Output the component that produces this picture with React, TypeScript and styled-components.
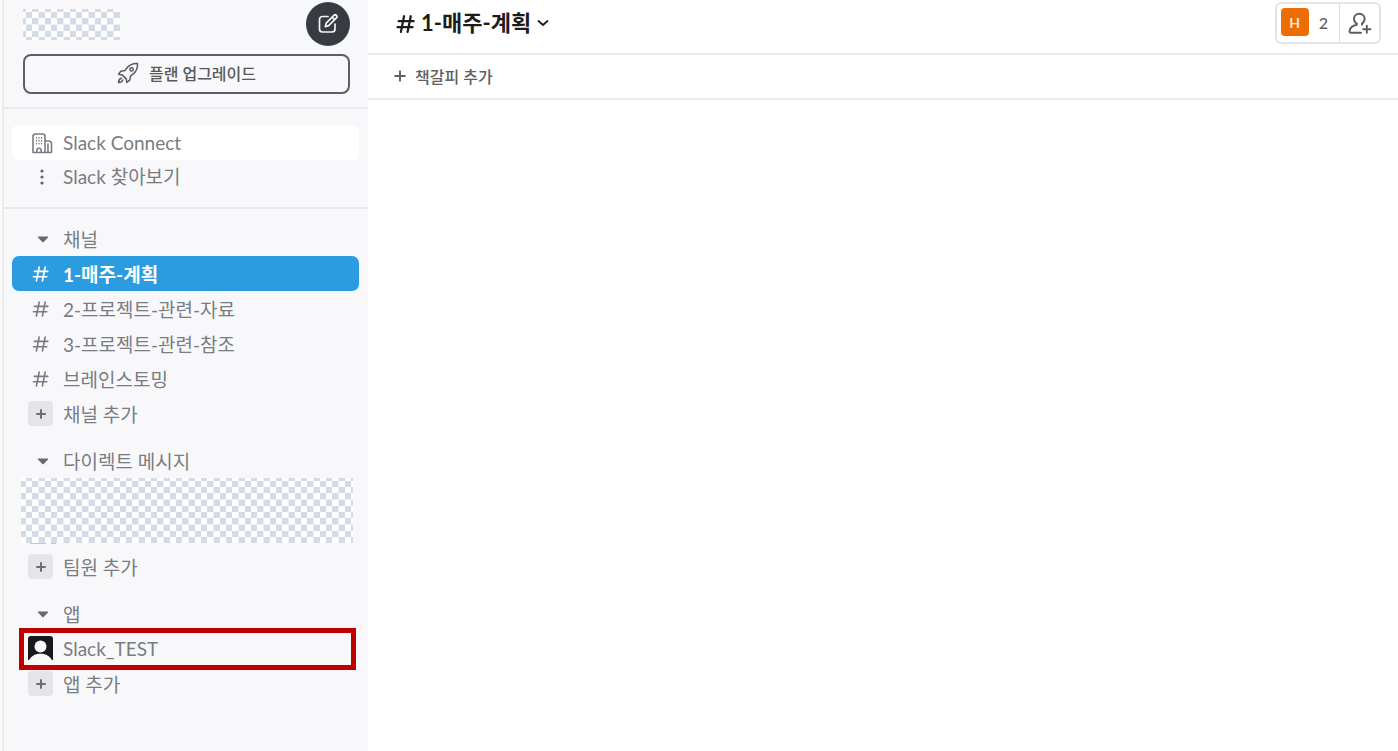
import React from "react";
import styled, { createGlobalStyle } from "styled-components";

const GlobalStyle = createGlobalStyle`
  *, *::before, *::after { box-sizing: border-box; }
  body {
    margin: 0;
    background: #fff;
    font-family: Lato, "Noto Sans CJK KR", sans-serif;
    color: #1d1c1d;
  }
  button {
    font: inherit;
    color: inherit;
    background: none;
    border: 0;
    padding: 0;
    cursor: pointer;
  }
  a { color: inherit; text-decoration: none; }
  h1, h2, ul { margin: 0; padding: 0; font: inherit; }
  ul { list-style: none; }
  svg { display: block; flex: none; }
`;

const Shell = styled.div`
  display: flex;
  min-height: 100vh;
`;

const Sidebar = styled.aside`
  display: flex;
  flex: 0 0 368px;
  background: #f8f8fa;
  border-left: 2px solid #fbfbfc;
  color: #797d82;
  font-size: 19px;
`;

const SidebarInner = styled.div`
  flex: 1;
  min-width: 0;
  border-left: 2px solid #ececef;
`;

const WorkspaceHeader = styled.header`
  height: 109px;
  padding: 2px 18px 0 19px;
  border-bottom: 2px solid #e9e9ec;
`;

const WorkspaceBar = styled.div`
  display: flex;
  justify-content: space-between;
  align-items: center;
  height: 44px;
`;

const ComposeButton = styled.button`
  display: grid;
  place-items: center;
  width: 44px;
  height: 44px;
  border-radius: 50%;
  background: #363c42;
  color: #f4f4f5;
`;

const UpgradeButton = styled.button`
  display: flex;
  align-items: center;
  justify-content: center;
  gap: 10px;
  width: 100%;
  height: 40px;
  margin-top: 8px;
  padding-bottom: 2px;
  border: 2px solid #5b6068;
  border-radius: 8px;
  color: #565a60;
  font-size: 16px;
  font-weight: 500;
`;

const Item = styled.a<{ $tone?: "active" | "raised" }>`
  display: flex;
  align-items: center;
  height: 35px;
  border-radius: 7px;
  background: ${(p) =>
    p.$tone === "active" ? "#2c9ce0" : p.$tone === "raised" ? "#fff" : "none"};
  color: ${(p) => (p.$tone === "active" ? "#fff" : "inherit")};
  font-weight: ${(p) => (p.$tone === "active" ? 700 : 400)};
`;

const QuickLinks = styled.nav`
  height: 100px;
  padding: 16px 9px 0 8px;
  border-bottom: 2px solid #e9e9ec;

  ${Item} + ${Item} { margin-top: -2px; }
`;

const Section = styled.section`
  padding: 12px 9px 0 8px;
`;

const SectionTitle = styled.button`
  display: flex;
  align-items: center;
  width: 100%;
  height: 35px;
`;

const IconSlot = styled.span<{ $indent?: number }>`
  display: flex;
  align-items: center;
  justify-content: center;
  flex: none;
  width: 25px;
  height: 25px;
  margin: 0 10px 0 16px;
  padding-left: ${(p) => p.$indent ?? 0}px;
`;

const AddSlot = styled(IconSlot)`
  border-radius: 4px;
  background: #e5e5e7;
  color: #6b6f74;
`;

const Highlight = styled.div`
  margin: -3px 3px -4px 7px;
  border: 5px solid #c00000;

  ${Item} { margin: -2px -8px -1px -12px; }
`;

const Masked = styled.div`
  margin: 0 6px 5px 9px;
`;

const SliverRow = styled.div`
  display: flex;
  gap: 5px;
  padding-left: 9px;

  i { height: 1px; background: #c5c8cd; width: 5px; }
  i:first-child { background: #f1b98d; width: 16px; }
`;

const Main = styled.main`
  flex: 1;
  min-width: 0;
`;

const ChannelHeader = styled.header`
  display: flex;
  align-items: center;
  justify-content: space-between;
  height: 55px;
  padding: 0 17px 7px 28px;
  border-bottom: 2px solid #ebebeb;
`;

const ChannelTitle = styled.button`
  display: flex;
  align-items: center;
  gap: 6px;
  font-size: 22px;
  font-weight: 700;
  line-height: 32px;
`;

const Members = styled.div`
  display: flex;
  height: 42px;
  border: 2px solid #e4e4e4;
  border-radius: 6px;
`;

const MemberCount = styled.button`
  display: flex;
  align-items: center;
  gap: 10px;
  padding: 0 11px 2px 4px;
  border-right: 1px solid #dcdcdc;
  color: #616061;
  font-size: 16px;
  font-weight: 500;
`;

const Avatar = styled.span`
  display: grid;
  place-items: center;
  width: 28px;
  height: 28px;
  border-radius: 4px;
  background: #ee6c04;
  color: #fce5d3;
  font-size: 14px;
  font-weight: 700;
`;

const InviteButton = styled.button`
  display: grid;
  place-items: center;
  width: 39px;
`;

const BookmarkBar = styled.div`
  display: flex;
  align-items: center;
  height: 45px;
  padding: 0 26px 2px;
  border-bottom: 2px solid #ebebeb;
`;

const BookmarkButton = styled.button`
  display: flex;
  align-items: center;
  gap: 9px;
  color: #616061;
  font-size: 16px;
  font-weight: 500;
`;

function Checker({ id, width, height, dx, dy }: {
  id: string; width: number; height: number; dx: number; dy: number;
}) {
  const squares: React.ReactNode[] = [];
  for (let r = 0; r < 4; r++)
    for (let c = 0; c < 4; c++)
      if ((r + c) % 2 === 0)
        squares.push(<rect key={`${r}${c}`} x={c * 6} y={r * 6} width="6" height="6" fill="#d5dbe6" />);
  return (
    <svg width={width} height={height} aria-hidden="true" shapeRendering="crispEdges">
      <defs>
        <pattern id={id} x={dx} y={dy} width="25" height="25" patternUnits="userSpaceOnUse">
          <rect width="25" height="25" fill="#fff" />
          {squares}
          <path d="M24 0h1v25H0v-1h24z" fill="#eef0f5" />
        </pattern>
      </defs>
      <rect width={width} height={height} fill={`url(#${id})`} />
    </svg>
  );
}

const stroke = { fill: "none", stroke: "currentColor", strokeLinecap: "round", strokeLinejoin: "round" } as const;

const Hash = ({ size = 17, weight = 1.6 }: { size?: number; weight?: number }) => (
  <svg width={size} height={size} viewBox="0 0 17 17" {...stroke} strokeWidth={weight}>
    <path d="M7.2 2 4.4 16M13.2 2l-2.800 14M2.400 6.400h13.400M1.400 11.800h13.400" />
  </svg>
);

const Plus = ({ size = 10, weight = 2 }: { size?: number; weight?: number }) => (
  <svg width={size} height={size} viewBox="0 0 10 10" {...stroke} strokeWidth={weight}>
    <path d="M5 1v8M1 5h8" />
  </svg>
);

const Caret = () => (
  <svg width="12" height="8" viewBox="0 0 12 8" fill="#666b71">
    <path d="M1.400 1.500h9.200c.6 0 .8.6.4 1L6.700 6.900a1 1 0 0 1-1.400 0L1 2.500c-.4-.4-.2-1 .4-1z" />
  </svg>
);

const Compose = () => (
  <svg width="22" height="22" viewBox="0 0 22 22" {...stroke} strokeWidth="1.7">
    <path d="M11 3.500H5.500a3 3 0 0 0-3 3V16a3 3 0 0 0 3 3H15a3 3 0 0 0 3-3v-5" />
    <path d="m8.300 13.700.9-3.600 7.700-7.700a1.700 1.700 0 0 1 2.500 2.500l-7.700 7.700zM15.300 4.300l2.400 2.400" />
  </svg>
);

const Rocket = () => (
  <svg width="22" height="22" viewBox="0 0 22 22" {...stroke} strokeWidth="1.5">
    <path d="M20.500 1.500c-5-.3-8.500 1.500-11.200 5.200L8 8.600l-4.200.7-2.200 3 3.600.6 4 4 .6 3.500 3-2.200.7-4.100 1.900-1.400c3.700-2.700 5.400-6.200 5.100-11.200z" />
    <circle cx="14.600" cy="7.400" r="1.700" />
    <path d="M4.300 16.200c-1.700.4-2.600 1.900-2.800 4.400 2.500-.2 4-1.100 4.300-2.700" />
  </svg>
);

const Building = () => (
  <svg width="22" height="22" viewBox="0 0 22 22" {...stroke} strokeWidth="1.6">
    <path d="M2 20.500V4.500A2.500 2.500 0 0 1 4.500 2h7A2.500 2.500 0 0 1 14 4.500v16zM14 9h3.500a3 3 0 0 1 3 3v8.500H14M17 12v8" />
    <path d="M5.800 20v-1.500a2.200 2.200 0 0 1 4.400 0V20" />
    <path d="M5.500 5.700v8M8 5.700v8M10.500 5.700v8" strokeWidth="1.300" strokeDasharray=".5 2.300" />
  </svg>
);

const Dots = () => (
  <svg width="4" height="18" viewBox="0 0 4 18" fill="#5f646a">
    <circle cx="2" cy="4" r="1.600" />
    <circle cx="2" cy="10" r="1.600" />
    <circle cx="2" cy="16" r="1.600" />
  </svg>
);

const Chevron = () => (
  <svg width="12" height="8" viewBox="0 0 12 8" {...stroke} strokeWidth="1.700">
    <path d="m1.500 2 4.500 4 4.500-4" />
  </svg>
);

const InviteIcon = () => (
  <svg width="24" height="24" viewBox="0 0 24 24" {...stroke} stroke="#5c5b5e" strokeWidth="1.900">
    <path d="M8.600 12.600C6.900 11.600 6 10 6 7.800 6 4.800 8.200 2.800 11.300 2.800s5.300 2 5.300 5c0 2.200-.9 3.800-2.600 4.800" />
    <path d="M8.600 12.600v1.400c-4 .5-6.600 2.400-7.100 6-.1 1 .4 1.700 1.300 1.700H13M14 12.600v1.200M18.800 14.600v7.200M15.200 18.200h7.200" />
  </svg>
);

const BotAvatar = () => (
  <svg width="25" height="25" viewBox="0 0 25 25">
    <path d="M3 0h19a3 3 0 0 1 3 3v21H0V3a3 3 0 0 1 3-3z" fill="#17181a" />
    <circle cx="12.500" cy="10.500" r="6" fill="#f8f8fa" />
    <path d="M.8 25C2.500 20.500 6.500 17.800 12.500 17.800S22.500 20.500 24.200 25z" fill="#f8f8fa" />
  </svg>
);

const SectionHeading = ({ children }: { children: React.ReactNode }) => (
  <h2>
    <SectionTitle type="button" aria-expanded="true">
      <IconSlot $indent={5}><Caret /></IconSlot>{children}
    </SectionTitle>
  </h2>
);

const AddItem = ({ children }: { children: React.ReactNode }) => (
  <Item href="#"><AddSlot><Plus /></AddSlot>{children}</Item>
);

const channels = ["1-매주-계획", "2-프로젝트-관련-자료", "3-프로젝트-관련-참조", "브레인스토밍"];

export default function App() {
  return (
    <>
      <GlobalStyle />
      <Shell>
        <Sidebar>
          <SidebarInner>
            <WorkspaceHeader>
              <WorkspaceBar>
                <Checker id="workspace-mask" width={97} height={31} dx={-9} dy={-9} />
                <ComposeButton type="button" aria-label="새 메시지"><Compose /></ComposeButton>
              </WorkspaceBar>
              <UpgradeButton type="button"><Rocket />플랜 업그레이드</UpgradeButton>
            </WorkspaceHeader>
            <QuickLinks>
              <Item href="#" $tone="raised"><IconSlot $indent={3}><Building /></IconSlot>Slack Connect</Item>
              <Item href="#"><IconSlot $indent={3}><Dots /></IconSlot>Slack 찾아보기</Item>
            </QuickLinks>
            <Section>
              <SectionHeading>채널</SectionHeading>
              <ul>
                {channels.map((name, i) => (
                  <li key={name}>
                    <Item href="#" $tone={i === 0 ? "active" : undefined}>
                      <IconSlot><Hash /></IconSlot>{name}
                    </Item>
                  </li>
                ))}
                <li><AddItem>채널 추가</AddItem></li>
              </ul>
            </Section>
            <Section>
              <SectionHeading>다이렉트 메시지</SectionHeading>
              <Masked>
                <Checker id="dm-mask" width={332} height={65} dx={-7} dy={-3} />
                <SliverRow><i /><i /></SliverRow>
              </Masked>
              <AddItem>팀원 추가</AddItem>
            </Section>
            <Section>
              <SectionHeading>앱</SectionHeading>
              <Highlight>
                <Item href="#"><IconSlot><BotAvatar /></IconSlot>Slack_TEST</Item>
              </Highlight>
              <AddItem>앱 추가</AddItem>
            </Section>
          </SidebarInner>
        </Sidebar>
        <Main>
          <ChannelHeader>
            <h1>
              <ChannelTitle type="button"><Hash size={19} weight={2} />1-매주-계획<Chevron /></ChannelTitle>
            </h1>
            <Members>
              <MemberCount type="button"><Avatar>H</Avatar>2</MemberCount>
              <InviteButton type="button" aria-label="멤버 초대"><InviteIcon /></InviteButton>
            </Members>
          </ChannelHeader>
          <BookmarkBar>
            <BookmarkButton type="button"><Plus size={12} weight={1.6} />책갈피 추가</BookmarkButton>
          </BookmarkBar>
        </Main>
      </Shell>
    </>
  );
}
